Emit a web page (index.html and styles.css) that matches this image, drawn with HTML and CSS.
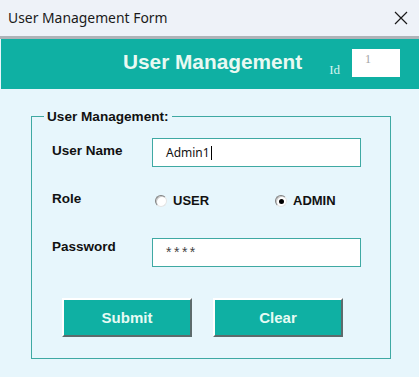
FILE: index.html
```html
<!DOCTYPE html>
<html>
<head>
<meta charset="utf-8">
<link rel="stylesheet" href="styles.css">
</head>
<body>
<div class="window">
  <div class="titlebar">
    <span class="title">User Management Form</span>
    <svg class="close" width="14" height="14" viewBox="0 0 14 14"><path d="M1 1 L13 13 M13 1 L1 13" stroke="#1a1a1a" stroke-width="1.2" fill="none"/></svg>
  </div>
  <div class="header">
    <span class="heading">User Management</span>
    <span class="id-label">Id</span>
    <div class="id-box">1</div>
  </div>
  <div class="content">
    <fieldset class="group">
      <legend class="legend">User Management:</legend>
      <div class="row row-name">
        <span class="label">User Name</span>
        <div class="textbox">Admin1<span class="caret"></span></div>
      </div>
      <div class="row row-role">
        <span class="label">Role</span>
        <div class="radios">
          <span class="radio-item radio-user"><span class="radio"></span><span class="radio-text">USER</span></span>
          <span class="radio-item"><span class="radio checked"></span><span class="radio-text">ADMIN</span></span>
        </div>
      </div>
      <div class="row row-pass">
        <span class="label label-pass">Password</span>
        <div class="textbox pass">****</div>
      </div>
      <div class="buttons">
        <div class="btn">Submit</div>
        <div class="btn">Clear</div>
      </div>
    </fieldset>
  </div>
</div>
</body>
</html>
```

FILE: styles.css
```css
html, body {
  margin: 0;
  padding: 0;
}
body {
  width: 419px;
  height: 377px;
  overflow: hidden;
  background: #e7f6fc;
  font-family: "Liberation Sans", Arial, sans-serif;
}
.window {
  width: 419px;
  height: 377px;
  display: flex;
  flex-direction: column;
}
.titlebar {
  height: 36px;
  flex: none;
  background: #eef2f8;
  border-bottom: 3px solid #aeb3b8;
  display: flex;
  align-items: center;
  justify-content: space-between;
  padding: 0 11px 0 8px;
  box-sizing: content-box;
}
.title {
  font-family: "Noto Sans", "Open Sans", sans-serif;
  font-size: 13.9px;
  color: #1a1a1a;
  margin-top: -1px;
}
.close {
  display: block;
  margin-top: -1px;
}
.header {
  height: 50px;
  flex: none;
  background: #0fb0a3;
  margin-left: 1px;
  display: flex;
  align-items: center;
  justify-content: flex-end;
  padding-right: 19px;
}
.heading {
  font-weight: bold;
  font-size: 20.8px;
  color: #e9f9f2;
  margin-top: -4px;
}
.id-label {
  font-family: "Liberation Serif", "Times New Roman", serif;
  font-size: 13px;
  color: #d6f4ef;
  margin-left: 27px;
  margin-top: 11px;
}
.id-box {
  width: 48px;
  height: 28px;
  background: #ffffff;
  margin-left: 12px;
  margin-top: -3px;
  box-sizing: border-box;
  padding: 3px 0 0 13px;
  font-family: "Liberation Serif", "Times New Roman", serif;
  font-size: 12px;
  color: #a3a3a3;
}
.content {
  flex: 1;
  padding: 20px 0 0 31px;
}
.group {
  width: 360px;
  box-sizing: border-box;
  margin: 0;
  padding: 0 0 21px 20px;
  border: 1px solid #3fa9a3;
  min-width: 0;
}
.legend {
  font-weight: bold;
  font-size: 13.6px;
  line-height: 15px;
  color: #111;
  padding: 0 3px;
  margin-left: -8px;
}
.row {
  display: flex;
  align-items: flex-start;
}
.label {
  width: 100px;
  flex: none;
  font-weight: bold;
  font-size: 13.5px;
  line-height: 15px;
  color: #111;
}
.row-name {
  margin-top: 14px;
}
.row-name .label {
  padding-top: 5px;
}
.textbox {
  width: 209px;
  height: 29px;
  box-sizing: border-box;
  background: #fff;
  border: 1px solid #3fa9a3;
  padding-left: 13px;
  display: flex;
  align-items: center;
  font-family: "Noto Sans", "Open Sans", sans-serif;
  font-size: 12px;
  color: #111;
}
.caret {
  display: inline-block;
  width: 1px;
  height: 14px;
  background: #000;
  margin-left: 1px;
}
.row-role {
  margin-top: 24px;
}
.radios {
  display: flex;
  padding-left: 3px;
}
.radio-item {
  display: flex;
  align-items: flex-start;
}
.radio-user {
  width: 120px;
}
.radio {
  width: 12px;
  height: 12px;
  box-sizing: border-box;
  border-radius: 50%;
  background: #fff;
  border: 1px solid;
  border-color: #7f7f7f #e4e4e4 #e4e4e4 #7f7f7f;
  box-shadow: inset 1px 1px 0 #c8c8c8;
  margin-top: 4px;
  display: flex;
  align-items: center;
  justify-content: center;
}
.radio.checked::after {
  content: "";
  width: 5px;
  height: 5px;
  border-radius: 50%;
  background: #000;
}
.radio-text {
  font-weight: bold;
  font-size: 13px;
  line-height: 15px;
  padding-top: 2px;
  margin-left: 6px;
  color: #111;
}
.row-pass {
  margin-top: 30px;
}
.label-pass {
  padding-top: 1px;
}
.textbox.pass {
  align-items: flex-start;
  padding-top: 5px;
  font-family: "Liberation Sans", Arial, sans-serif;
  font-size: 14px;
  letter-spacing: 2.5px;
  color: #444;
}
.buttons {
  display: flex;
  gap: 21px;
  margin-top: 31px;
  margin-left: 10px;
}
.btn {
  width: 130px;
  height: 39px;
  box-sizing: border-box;
  background: #0fb0a3;
  border-top: 2px solid #fff;
  border-left: 2px solid #fff;
  border-right: 2px solid #5d6b6c;
  border-bottom: 2px solid #5d6b6c;
  display: flex;
  align-items: center;
  justify-content: center;
  font-weight: bold;
  font-size: 15px;
  color: #e6fbf4;
}
```
